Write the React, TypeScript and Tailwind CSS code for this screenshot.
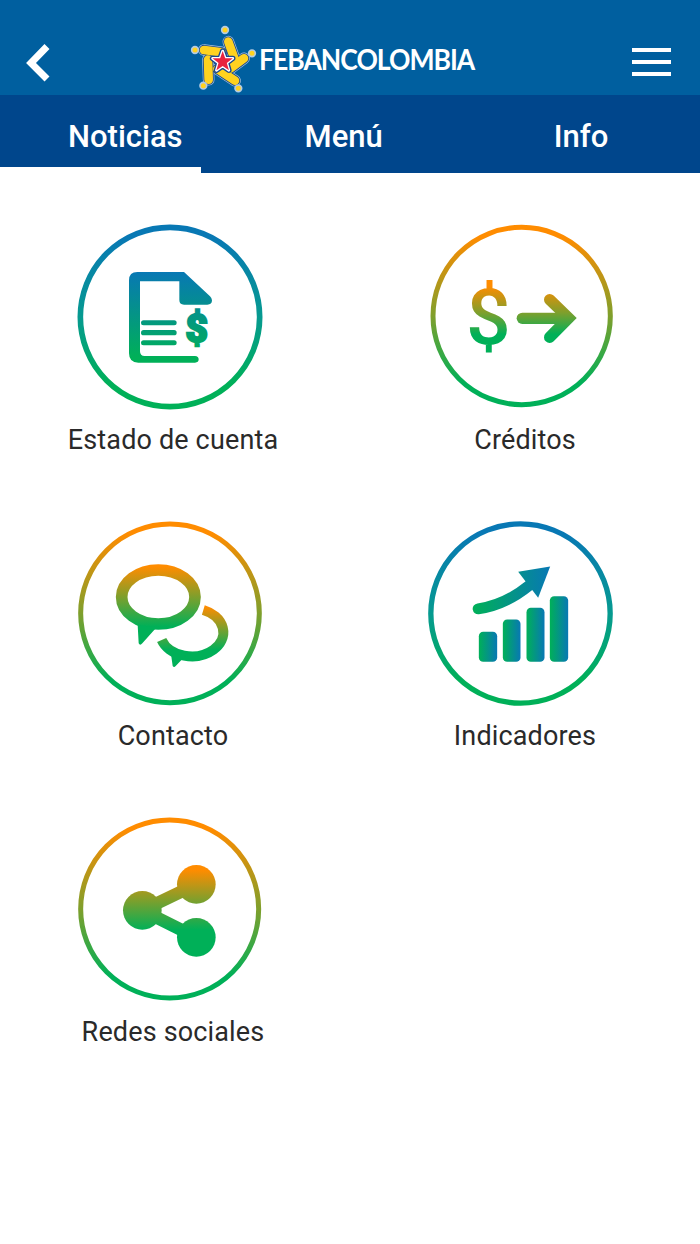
const BLUE = "#0878b4";
const ORANGE = "#ff8c00";
const GREEN = "#00b058";

const Ring = ({ id, cx, cy, r, w, top }: { id: string; cx: number; cy: number; r: number; w: number; top: string }) => (
  <>
    <linearGradient id={id} x1="0" y1="0" x2="0" y2="1">
      <stop offset="0.05" stopColor={top} />
      <stop offset="0.5" stopColor={top === ORANGE ? "#7f9f2c" : "#069a90"} />
      <stop offset="0.88" stopColor={GREEN} />
    </linearGradient>
    <circle cx={cx} cy={cy} r={r} fill="none" stroke={`url(#${id})`} strokeWidth={w} />
  </>
);

const StatementIcon = () => (
  <svg width="200" height="200" viewBox="39 17 600 600">
    <Ring id="r1" cx={330} cy={320} r={269} w={17} top={BLUE} />
    <linearGradient id="g1" gradientUnits="userSpaceOnUse" x1="0" y1="185" x2="0" y2="440">
      <stop offset="0" stopColor={BLUE} />
      <stop offset="1" stopColor={GREEN} />
    </linearGradient>
    <g fill="url(#g1)">
      <path d="M232 185H372L450 258Q456 264 456 270Q456 283 442 283H372Q358 283 358 269V213H240V423Q240 437 254 437H405Q416 438 416 447Q416 457 405 457H235Q207 457 207 429V210Q207 185 232 185Z" />
      <rect x="243" y="330" width="107" height="15" rx="7.5" />
      <rect x="243" y="359" width="107" height="16" rx="8" />
      <rect x="243" y="390" width="107" height="15" rx="7.5" />
      <text
        x="410"
        y="396"
        textAnchor="middle"
        fontFamily="Roboto"
        fontWeight="900"
        fontSize="116"
        stroke="url(#g1)"
        strokeWidth="7"
      >
        $
      </text>
    </g>
  </svg>
);

const CreditIcon = () => (
  <svg width="200" height="200" viewBox="45 20 600 600">
    <Ring id="r2" cx={335} cy={320} r={266} w={15} top={ORANGE} />
    <linearGradient id="g2" gradientUnits="userSpaceOnUse" x1="0" y1="230" x2="0" y2="375">
      <stop offset="0" stopColor={ORANGE} />
      <stop offset="0.55" stopColor="#7f9f2c" />
      <stop offset="1" stopColor={GREEN} />
    </linearGradient>
    <text x="235" y="405" textAnchor="middle" fontFamily="Roboto" fontWeight="500" fontSize="236" fill="url(#g2)">
      $
    </text>
    <g fill="none" stroke="url(#g2)" strokeLinecap="round" strokeLinejoin="miter">
      <path d="M337 327H465" strokeWidth="34" />
      <path d="M419 271L476 326L419 384" strokeWidth="34" />
    </g>
  </svg>
);

const ContactIcon = () => (
  <svg width="200" height="200" viewBox="39 6 600 600">
    <Ring id="r3" cx={330} cy={310} r={268} w={15} top={ORANGE} />
    <linearGradient id="g3" gradientUnits="userSpaceOnUse" x1="0" y1="170" x2="0" y2="350">
      <stop offset="0" stopColor={ORANGE} />
      <stop offset="0.5" stopColor="#7f9f2c" />
      <stop offset="1" stopColor={GREEN} />
    </linearGradient>
    <linearGradient id="g4" gradientUnits="userSpaceOnUse" x1="0" y1="290" x2="0" y2="420">
      <stop offset="0" stopColor={ORANGE} />
      <stop offset="0.5" stopColor="#7f9f2c" />
      <stop offset="1" stopColor={GREEN} />
    </linearGradient>
    <ellipse cx="295" cy="261" rx="110" ry="81" fill="none" stroke="url(#g3)" strokeWidth="35" />
    <path d="M233 345L236 400Q240 408 247 400L290 352Z" fill={GREEN} />
    <path d="M430 300A95 72 0 1 1 305 390" fill="none" stroke="url(#g4)" strokeWidth="30" />
    <path d="M332 425L338 468Q342 474 347 468L376 438Z" fill={GREEN} />
  </svg>
);

const ChartIcon = () => (
  <svg width="200" height="200" viewBox="45.5 5.5 600 600">
    <Ring id="r4" cx={332} cy={310} r={269} w={16} top={BLUE} />
    <linearGradient id="g5" gradientUnits="userSpaceOnUse" x1="190" y1="0" x2="420" y2="0">
      <stop offset="0" stopColor={GREEN} />
      <stop offset="1" stopColor={BLUE} />
    </linearGradient>
    <linearGradient id="g7" x1="0" y1="0" x2="1" y2="0">
      <stop offset="0" stopColor={GREEN} />
      <stop offset="1" stopColor={BLUE} />
    </linearGradient>
    <g fill="url(#g7)">
      <rect x="207" y="365" width="55" height="90" rx="13" />
      <rect x="279" y="328" width="53" height="127" rx="13" />
      <rect x="350" y="293" width="54" height="162" rx="13" />
      <rect x="420" y="258" width="55" height="197" rx="13" />
    </g>
    <path d="M325 185L421 169L385 263Z" fill="url(#g5)" />
    <path d="M205 296Q285 285 358 226" fill="none" stroke="url(#g5)" strokeWidth="33" strokeLinecap="round" />
  </svg>
);

const ShareIcon = () => (
  <svg width="200" height="200" viewBox="40 9 600 600">
    <Ring id="r5" cx={330} cy={312} r={267} w={15} top={ORANGE} />
    <linearGradient id="g6" gradientUnits="userSpaceOnUse" x1="0" y1="195" x2="0" y2="375">
      <stop offset="0" stopColor={ORANGE} />
      <stop offset="0.5" stopColor="#7f9f2c" />
      <stop offset="1" stopColor={GREEN} />
    </linearGradient>
    <g fill="url(#g6)">
      <circle cx="410" cy="238" r="58" />
      <circle cx="248" cy="316" r="58" />
      <circle cx="410" cy="397" r="58" />
    </g>
    <path d="M410 238L248 316L410 397" fill="none" stroke="url(#g6)" strokeWidth="38" />
  </svg>
);

const STAR_TIPS = [
  [135, 43],
  [45, 103],
  [216, 113],
  [70, 210],
  [175, 218],
];

const BARS = [
  "M145 78L163 128",
  "M192 128L152 158",
  "M165 195L112 160",
  "M86 192L84 132",
  "M72 103L125 110",
];

const STAR =
  "M128 106L135.6 127.5L158.4 128.1L140.4 142L146.8 163.9L128 151L109.2 163.9L115.6 142L97.6 128.1L120.4 127.5Z";

const LogoMark = () => (
  <svg width="70" height="70" viewBox="30 25 210 210">
    {BARS.map((d) => (
      <path key={d} d={d} fill="none" strokeLinecap="round" stroke="#a9c4de" strokeWidth="35" />
    ))}
    {BARS.map((d) => (
      <path key={d} d={d} fill="none" strokeLinecap="round" stroke="#17468f" strokeWidth="31" />
    ))}
    {BARS.map((d) => (
      <path key={d} d={d} fill="none" strokeLinecap="round" stroke="#ffd21f" strokeWidth="26" />
    ))}
    {STAR_TIPS.map(([x, y]) => (
      <circle key={x} cx={x} cy={y} r="10" fill="#ffd21f" stroke="#b4cbe2" strokeWidth="5" />
    ))}
    <path d={STAR} fill="#17468f" stroke="#17468f" strokeWidth="16" strokeLinejoin="round" />
    <path d={STAR} fill="#ffffff" stroke="#ffffff" strokeWidth="8" strokeLinejoin="round" />
    <path d={STAR} fill="#e8233f" />
  </svg>
);

const items = [
  { label: "Estado de cuenta", icon: <StatementIcon /> },
  { label: "Créditos", icon: <CreditIcon /> },
  { label: "Contacto", icon: <ContactIcon /> },
  { label: "Indicadores", icon: <ChartIcon /> },
  { label: "Redes sociales", icon: <ShareIcon /> },
];

export default function App() {
  return (
    <div className="h-[1244px] w-[700px] overflow-hidden bg-white font-['Roboto',sans-serif]">
      <header className="flex h-[95px] items-center bg-[#005f9f] pl-[24px] pr-[29px] pt-[28px]">
        <svg width="28" height="40" viewBox="0 0 28 40">
          <path d="M23 4.5L7 21L23 37" fill="none" stroke="#ffffff" strokeWidth="7" />
        </svg>
        <div className="ml-[138px] mt-[-6px] flex items-center">
          <LogoMark />
          <span className="ml-[-1px] origin-left scale-x-[0.915] font-['Lato',sans-serif] text-[29px] font-bold tracking-[-1.1px] text-white">
            FEBANCOLOMBIA
          </span>
        </div>
        <div className="ml-auto flex w-[39px] flex-col gap-[8px]">
          <div className="h-[4px] bg-white" />
          <div className="h-[4px] bg-white" />
          <div className="h-[4px] bg-white" />
        </div>
      </header>

      <nav className="relative flex h-[78px] items-center bg-[#00468c] pt-[6px] text-[31px] font-medium text-white">
        <span className="ml-[68px]">Noticias</span>
        <span className="ml-[122px]">Menú</span>
        <span className="ml-[171px]">Info</span>
        <div className="absolute bottom-0 left-0 h-[6px] w-[201px] bg-white" />
      </nav>

      <main className="grid grid-cols-[346px_350px] gap-x-1 gap-y-[54px] pt-[43px]">
        {items.map((item) => (
          <div key={item.label} className="flex flex-col items-center">
            {item.icon}
            <span className="mt-[6px] text-[27px] leading-[36px] tracking-[0.15px] text-[#2a2a2a]">{item.label}</span>
          </div>
        ))}
      </main>
    </div>
  );
}
